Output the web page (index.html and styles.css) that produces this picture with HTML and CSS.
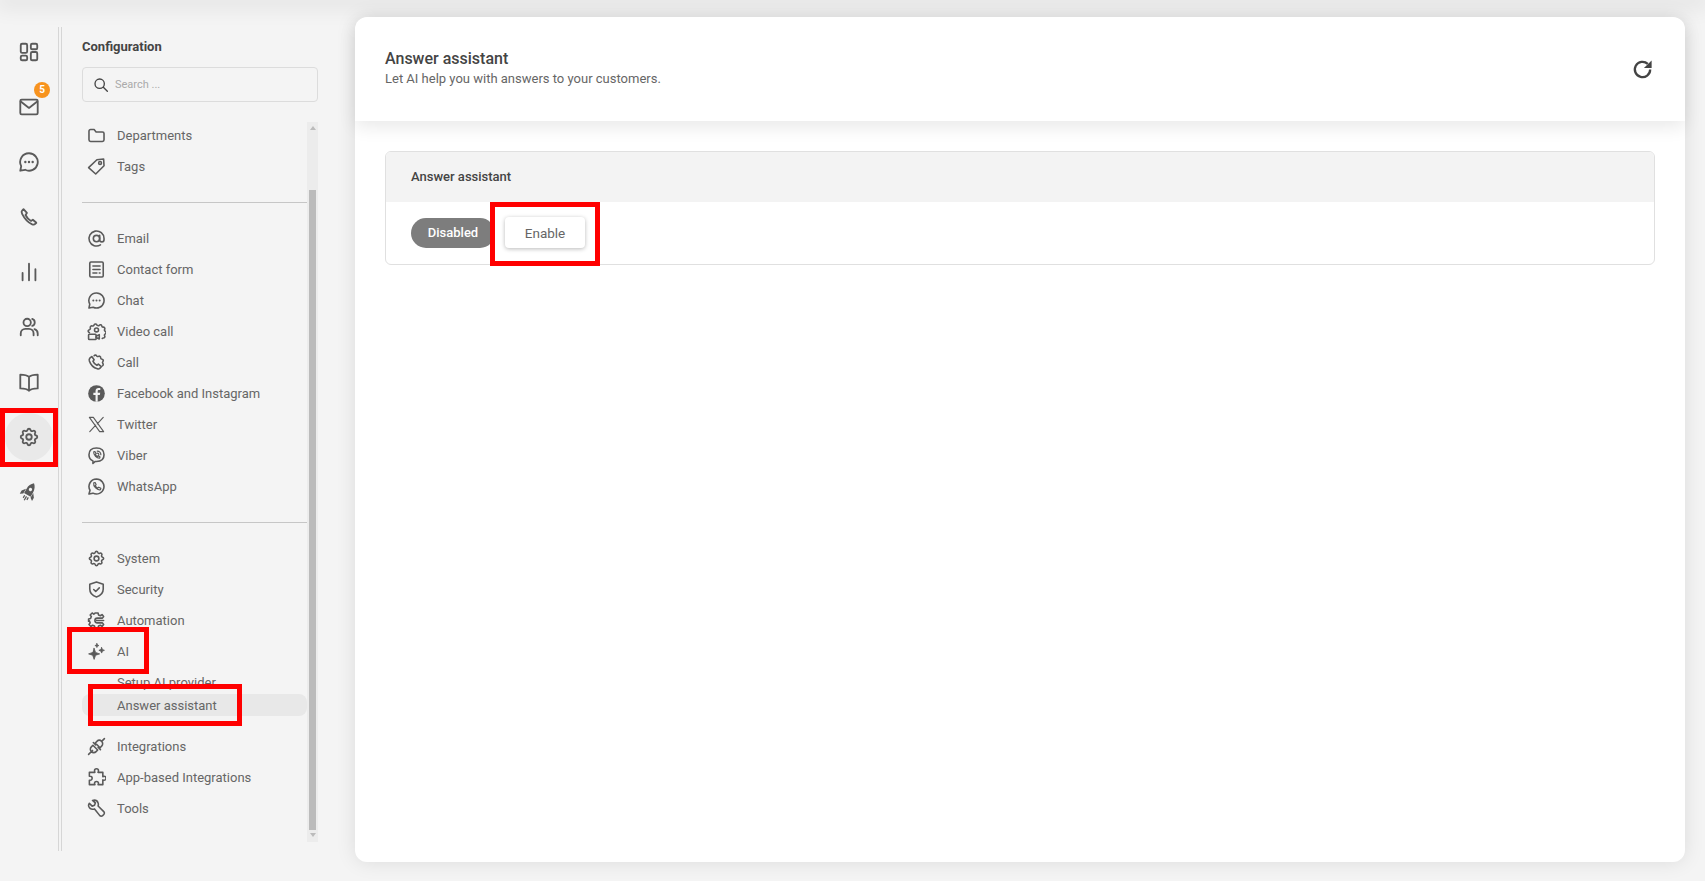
FILE: index.html
```html
<!DOCTYPE html>
<html lang="en">
<head>
    <meta charset="UTF-8">
    <meta name="viewport" content="width=device-width, initial-scale=1.0">
    <title>Answer assistant</title>
    <link rel="stylesheet" href="styles.css">
</head>
<body>
    <!-- shared icons -->
    <svg class="defs" aria-hidden="true">
        <symbol id="i-gear" viewBox="0 0 24 24">
            <path d="M10.325 4.317c.426-1.756 2.924-1.756 3.35 0a1.724 1.724 0 0 0 2.573 1.066c1.543-.94 3.31.826 2.37 2.37a1.724 1.724 0 0 0 1.065 2.572c1.756.426 1.756 2.924 0 3.35a1.724 1.724 0 0 0-1.066 2.573c.94 1.543-.826 3.31-2.37 2.37a1.724 1.724 0 0 0-2.572 1.065c-.426 1.756-2.924 1.756-3.35 0a1.724 1.724 0 0 0-2.573-1.066c-1.543.94-3.31-.826-2.37-2.37a1.724 1.724 0 0 0-1.065-2.572c-1.756-.426-1.756-2.924 0-3.35a1.724 1.724 0 0 0 1.066-2.573c-.94-1.543.826-3.31 2.37-2.37 1 .608 2.296.07 2.572-1.065z"/>
            <circle cx="12" cy="12" r="3"/>
        </symbol>
        <symbol id="i-chat" viewBox="0 0 24 24">
            <path d="M12 2.500a9.500 9.500 0 1 1-4.200 18L2.500 21.500l1-5A9.500 9.500 0 0 1 12 2.500z"/>
            <path class="dots" d="M8 12h.01M12 12h.01M16 12h.01"/>
        </symbol>
    </svg>

    <div class="topbar"></div>

    <div class="app">
        <nav class="rail">
            <div class="rail-list">
                <a class="rail-item">
                    <svg class="icon rail-icon" viewBox="0 0 24 24"><rect x="3" y="3" width="7" height="10" rx="1.5"/><rect x="14" y="3" width="7" height="6" rx="1.5"/><rect x="3" y="16" width="7" height="5" rx="1.5"/><rect x="14" y="12" width="7" height="9" rx="1.5"/></svg>
                </a>
                <a class="rail-item">
                    <svg class="icon rail-icon" viewBox="0 0 24 24"><rect x="2.500" y="4" width="19" height="16" rx="1.500"/><path d="M3 6l9 7 9-7"/></svg>
                    <span class="badge">5</span>
                </a>
                <a class="rail-item"><svg class="icon rail-icon"><use href="#i-chat"/></svg></a>
                <a class="rail-item">
                    <svg class="icon rail-icon" viewBox="0 0 24 24"><path d="M6 3.500L4.500 5c-.8.8-.8 2 0 3.500 2.500 5 6.500 9.500 11 11.500 1.500.6 2.500.3 3.300-.5l1.200-1.200-3.800-3.300-2 1.300c-2.500-1.300-4.700-3.800-6-6.500l1.500-2.200z"/></svg>
                </a>
                <a class="rail-item">
                    <svg class="icon rail-icon" viewBox="0 0 24 24"><path d="M5 21v-8M12 21V3M19 21V9"/></svg>
                </a>
                <a class="rail-item">
                    <svg class="icon rail-icon" viewBox="0 0 24 24"><circle cx="10" cy="7" r="4"/><path d="M3 21v-2a5 5 0 0 1 5-5h4a5 5 0 0 1 5 5v2M15.500 3.200a4 4 0 0 1 0 7.600M21.500 21v-2a5 5 0 0 0-3.500-4.700"/></svg>
                </a>
                <a class="rail-item">
                    <svg class="icon rail-icon" viewBox="0 0 24 24"><path d="M12 6.500C10 4.500 7 4 2.500 4v15c4.500 0 7.500.5 9.500 2.500 2-2 5-2.500 9.500-2.500V4C17 4 14 4.500 12 6.500zM12 6.500v15"/></svg>
                </a>
                <a class="rail-item rail-item-active"><svg class="icon rail-icon"><use href="#i-gear"/></svg></a>
                <a class="rail-item">
                    <svg class="rail-icon rocket" viewBox="0 0 24 24"><g transform="rotate(30 12 12)"><path d="M12 0c3 2.500 4.500 6 4.500 10v6h-9v-6C7.500 6 9 2.500 12 0z"/><path d="M7 10.500L3.500 15v4.500L7 17zM17 10.500l3.500 4.500v4.500L17 17z"/><circle class="hole" cx="12" cy="8.500" r="2"/><path class="flame" d="M9.500 18v3.500M12 18v5.500M14.500 18v3.500"/></g></svg>
                </a>
            </div>
        </nav>

        <aside class="sidebar">
            <h2 class="side-title">Configuration</h2>
            <div class="search">
                <svg class="icon search-icon" viewBox="0 0 24 24"><circle cx="10" cy="10" r="7"/><path d="M15.500 15.500L21.500 21.500"/></svg>
                <span class="search-text">Search ...</span>
            </div>
            <div class="side-scroll">
                <div class="nav">
                    <a class="row">
                        <svg class="icon" viewBox="0 0 24 24"><path d="M2.500 6.500a2 2 0 0 1 2-2h4.500l2.500 3h8a2 2 0 0 1 2 2v8a2 2 0 0 1-2 2h-15a2 2 0 0 1-2-2z"/></svg>
                        Departments
                    </a>
                    <a class="row">
                        <svg class="icon" viewBox="0 0 24 24"><path d="M2 13.500L12.500 3.500l8.500-1 .5 8.500L11 21.500z"/><circle cx="16.500" cy="7.500" r="1.800"/></svg>
                        Tags
                    </a>
                    <div class="divider"></div>
                    <a class="row">
                        <svg class="icon" viewBox="0 0 24 24"><circle cx="12" cy="12" r="4"/><path d="M16 8v5.500a2.750 2.750 0 0 0 5.500 0V12A9.500 9.500 0 1 0 17 20.100"/></svg>
                        Email
                    </a>
                    <a class="row">
                        <svg class="icon" viewBox="0 0 24 24"><rect x="3.500" y="2.500" width="17" height="19" rx="1.500"/><path d="M7.500 7.500h9M7.500 12h9M7.500 16.500h5M15.500 16.500h1"/></svg>
                        Contact form
                    </a>
                    <a class="row"><svg class="icon"><use href="#i-chat"/></svg>Chat</a>
                    <a class="row">
                        <svg class="icon" viewBox="0 0 24 24"><path d="M3 13.500l-1.200-1c-.8-1.200 0-2.500 1.200-2.800 1-.3 1.600-1.300 1.200-2.400-.4-1.500 1-2.800 2.400-2.300 1 .3 2-.2 2.300-1.200.5-1.400 2.300-1.700 3.100-.8l1 1.300c.8.500 2 .4 2.600-.3 1-.9 2.700-.5 3 1 .2 1 1 1.600 2 1.500 1.500 0 2.400 1.600 1.700 2.800-.5.900-.2 2 .8 2.500 1.300.7 1.300 2.500 0 3.200-1 .5-1.300 1.600-.8 2.500.7 1.200-.2 2.800-1.700 2.800-.5 0-1 .1-1.300.5"/><circle cx="12" cy="10" r="2.500"/><rect x="2" y="15.500" width="9.500" height="6.500" rx="1"/><path d="M11.500 18l4-2v5.500l-4-2"/></svg>
                        Video call
                    </a>
                    <a class="row">
                        <svg class="icon" viewBox="0 0 24 24"><path d="M9 3.500c1-1.300 2.500-1 3 0 .5 1 1.600 1.300 2.500.7 1.200-.7 2.800.2 2.700 1.700 0 1 .7 1.800 1.800 1.900 1.500.2 2.100 2 1.100 3-.7.800-.7 1.800 0 2.600.8 1 .4 2.200-.6 2.800"/><path d="M3.500 6.500L6 4.500l3 4-1.500 1.800c.9 2.200 2.800 4.200 5 5.200l1.800-1.500 3.800 3.200-2 2.300c-.8.700-1.800.9-3 .4C8 18.500 4.500 14.500 3 10c-.4-1.300-.2-2.600.5-3.500z"/></svg>
                        Call
                    </a>
                    <a class="row">
                        <svg class="icon filled" viewBox="0 0 24 24"><circle cx="12" cy="12" r="10.500"/><path class="cut" d="M13.500 22.500V14h2.700l.5-3h-3.200V9.200c0-.9.400-1.500 1.600-1.500h1.700V5.100c-.5-.1-1.300-.2-2.200-.2-2.300 0-3.800 1.400-3.800 3.900V11H8v3h2.800v8.500z"/></svg>
                        Facebook and Instagram
                    </a>
                    <a class="row">
                        <svg class="icon thin" viewBox="0 0 24 24"><path d="M3 3l13 18h5L8 3zM20.500 3l-7.500 8.200M3.500 21l7.500-8.200"/></svg>
                        Twitter
                    </a>
                    <a class="row">
                        <svg class="icon" viewBox="0 0 24 24"><path d="M12 2.500c6 0 9.500 2.800 9.500 8.500s-3.500 8.500-9.500 8.500h-1.500L7.500 22v-3.200c-3.200-1.300-5-3.800-5-7.800 0-5.700 3.500-8.500 9.500-8.500z"/><path class="half" d="M8.500 7.500l1.500-.5 1.500 2.500-1 1c.5 1.300 1.500 2.300 2.800 2.800l1-1 2.200 1.500-.5 1.500c-3.500.5-8-4-7.500-7.800zM13 6.500a4.500 4.500 0 0 1 4.500 4.500M13 9a2 2 0 0 1 2 2"/></svg>
                        Viber
                    </a>
                    <a class="row">
                        <svg class="icon" viewBox="0 0 24 24"><path d="M12 2.500a9.500 9.500 0 1 1-4.500 17.900L2.500 21.500l1.300-4.800A9.500 9.500 0 0 1 12 2.500z"/><path class="half" d="M8.500 7.500l1.800-.5 1.300 2.700-1.100 1.200c.6 1.400 1.700 2.500 3.100 3.100l1.200-1.100 2.700 1.300-.5 1.800c-4 1.200-9.500-4.300-8.500-8.500z"/></svg>
                        WhatsApp
                    </a>
                    <div class="divider"></div>
                    <a class="row"><svg class="icon"><use href="#i-gear"/></svg>System</a>
                    <a class="row">
                        <svg class="icon" viewBox="0 0 24 24"><path d="M12 2.500l8.500 3v6c0 4.800-3.300 8.500-8.500 10-5.200-1.500-8.500-5.200-8.500-10v-6z"/><path d="M8.500 12l2.500 2.500 4.500-4.500"/></svg>
                        Security
                    </a>
                    <a class="row">
                        <svg class="icon" viewBox="0 0 24 24"><path d="M10 2.500h4l.5 2.500 2.500 1 2-1.500 2 2.500-1.500 2H13a3 3 0 0 0 0 6h6.500l1.500 2-2 2.500-2-1.500-2.500 1-.5 2.500h-4l-.5-2.500-2.500-1-2 1.500-2.500-2.500 1.500-2-1-2.500L2 13v-3l2.500-.5 1-2.500L4 5l2.500-2.500 2 1.500 1-.5z"/><path d="M12 12h9"/></svg>
                        Automation
                    </a>
                    <a class="row">
                        <svg class="icon sparkle" viewBox="0 0 24 24"><path d="M9 8l1.800 5.200 5.200 1.800-5.200 1.800L9 22l-1.800-5.200L2 15l5.200-1.800zM18.500 7l1 2.500 2.500 1-2.500 1-1 2.500-1-2.500-2.500-1 2.500-1zM12.500 2l.7 1.800 1.800.7-1.800.7-.7 1.800-.7-1.800-1.800-.7 1.800-.7z"/></svg>
                        AI
                    </a>
                    <a class="row-sub row-first">Setup AI provider</a>
                    <a class="row-sub row-active">Answer assistant</a>
                    <a class="row row-after">
                        <svg class="icon" viewBox="0 0 24 24"><path d="M2 22l5-5M7.500 10.500l6 6-2 2c-1.700 1.700-4.300 1.700-6 0s-1.700-4.300 0-6zM10.500 7.500l2-2c1.700-1.700 4.300-1.700 6 0s1.700 4.300 0 6l-2 2zM8 7l3 3M14 13l3 3M18.500 5.500L22 2"/></svg>
                        Integrations
                    </a>
                    <a class="row">
                        <svg class="icon" viewBox="0 0 24 24"><path d="M9.500 3.500a2.500 2.500 0 0 1 5 0c0 .8-.3 1.500-.5 2h6v5.500c.5-.3 1-.5 1.500-.5a2.500 2.500 0 0 1 0 5c-.5 0-1-.2-1.500-.5V21h-6c.2-.5.5-1 .5-1.500a2.500 2.500 0 0 0-5 0c0 .5.300 1 .5 1.500H3v-5.500h1a2.500 2.500 0 0 0 0-5H3V5.500h7c-.2-.5-.5-1.200-.5-2z"/></svg>
                        App-based Integrations
                    </a>
                    <a class="row">
                        <svg class="icon" viewBox="0 0 24 24"><path d="M3 5.500L6.500 9 9.500 8l1-3L7 1.800c3-.8 6 .5 7 3.200.5 1.300.5 2.500 0 3.800l7.200 7.200c1 1 1 2.500 0 3.500l-1.500 1.500c-1 1-2.500 1-3.500 0L9.500 12.500c-3 1-6-.2-7.200-3-.5-1.300-.2-3 .7-4z"/></svg>
                        Tools
                    </a>
                </div>
                <div class="scrollbar">
                    <span class="arrow-up"></span>
                    <div class="thumb"></div>
                    <span class="arrow-down"></span>
                </div>
            </div>
        </aside>

        <main class="card">
            <header class="card-head">
                <div class="card-text">
                    <h1 class="card-title">Answer assistant</h1>
                    <p class="card-sub">Let AI help you with answers to your customers.</p>
                </div>
                <svg class="refresh" viewBox="0 0 24 24"><path class="refresh-arc" d="M20 12a8 8 0 1 1-2.500-5.800"/><path class="refresh-tip" d="M21.500 2.500v8h-8z"/></svg>
            </header>
            <section class="panel">
                <div class="panel-head">Answer assistant</div>
                <div class="panel-body">
                    <span class="pill">Disabled</span>
                    <button class="btn">Enable</button>
                </div>
            </section>
        </main>
    </div>

    <!-- red highlight frames drawn over the page -->
    <div class="mark mark-gear"></div>
    <div class="mark mark-ai"></div>
    <div class="mark mark-answer"></div>
    <div class="mark mark-enable"></div>
</body>
</html>
```
FILE: styles.css
```css
* {
    box-sizing: border-box;
}
html, body {
    height: 100%;
}
body {
    margin: 0;
    height: 881px;
    overflow: hidden;
    font-family: Roboto, "Liberation Sans", sans-serif;
    font-size: 13px;
    color: #666;
    background-color: #f4f4f4;
}
.defs {
    display: none;
}
.topbar {
    height: 0;
    box-shadow: 0 0 22px 5px rgba(0,0,0,0.12);
}
.app {
    display: flex;
    align-items: flex-start;
}

/* icons */
.icon {
    width: 19px;
    height: 19px;
    flex: none;
    fill: none;
    stroke: #5a5a5a;
    stroke-width: 2;
    stroke-linecap: round;
    stroke-linejoin: round;
}
.dots {
    stroke-width: 2.6;
}
.thin {
    stroke-width: 1.4;
}
.half {
    stroke-width: 1.5;
}
.filled {
    fill: #5a5a5a;
    stroke: none;
}
.cut {
    fill: #f4f4f4;
}
.sparkle {
    fill: #5a5a5a;
    stroke-width: 1;
}

/* left rail */
.rail {
    width: 59px;
    height: 824px;
    margin-top: 27px;
    border-right: 1px solid #d6d6d6;
}
.rail-list {
    margin-top: -3px;
}
.rail-item {
    position: relative;
    display: flex;
    align-items: center;
    justify-content: center;
    height: 55px;
    width: 58px;
}
.rail-item-active::before {
    content: "";
    position: absolute;
    left: 5px;
    top: 4px;
    width: 48px;
    height: 48px;
    border-radius: 50%;
    background-color: #e9e9e9;
}
.rail-icon {
    position: relative;
    width: 22px;
    height: 22px;
}
.rocket {
    width: 20px;
    height: 20px;
    fill: #5a5a5a;
}
.rocket .hole {
    fill: #f4f4f4;
}
.rocket .flame {
    fill: none;
    stroke: #5a5a5a;
    stroke-width: 1.5;
}
.badge {
    position: absolute;
    left: 34px;
    top: 3px;
    width: 16px;
    height: 16px;
    border-radius: 50%;
    background-color: #f7931e;
    color: #fff;
    font-size: 10px;
    font-weight: 700;
    line-height: 16px;
    text-align: center;
}

/* configuration column */
.sidebar {
    width: 259px;
    height: 824px;
    margin-top: 27px;
    margin-left: 2px;
    padding: 12px 0 0 20px;
    border-left: 1px solid #d6d6d6;
}
.side-title {
    margin: 0;
    font-size: 13px;
    font-weight: 700;
    line-height: 16px;
    color: #444;
}
.search {
    display: flex;
    align-items: center;
    gap: 6px;
    width: 236px;
    height: 35px;
    margin-top: 12px;
    padding-left: 10px;
    border: 1px solid #dcdcdc;
    border-radius: 4px;
}
.search-icon {
    width: 16px;
    height: 16px;
    stroke: #444;
}
.search-text {
    font-size: 11px;
    color: #aaa;
}
.side-scroll {
    display: flex;
    width: 236px;
    height: 722px;
    margin-top: 18px;
}
.nav {
    width: 225px;
    overflow: hidden;
}
.row {
    display: flex;
    align-items: center;
    gap: 11px;
    height: 31px;
    padding-left: 5px;
    color: #666;
}
.divider {
    height: 1px;
    margin: 20px 0;
    background-color: #c6c6c6;
}
.row-sub {
    display: flex;
    align-items: center;
    height: 22px;
    padding-left: 35px;
    color: #666;
}
.row-first {
    margin-top: 4px;
}
.row-active {
    margin-top: 1px;
    border-radius: 8px;
    background-color: #e8e8e8;
}
.row-after {
    margin-top: 15px;
}
.scrollbar {
    display: flex;
    flex-direction: column;
    align-items: center;
    width: 11px;
    height: 720px;
    margin-top: 2px;
    background-color: #ececec;
}
.arrow-up, .arrow-down {
    width: 0;
    height: 0;
    margin-top: 4px;
    border-left: 3px solid transparent;
    border-right: 3px solid transparent;
}
.arrow-up {
    border-bottom: 4px solid #bbb;
}
.arrow-down {
    margin-top: 3px;
    border-top: 4px solid #bbb;
}
.thumb {
    width: 7px;
    height: 640px;
    margin-top: 60px;
    background-color: #bbb;
}

/* main card */
.card {
    width: 1330px;
    height: 845px;
    margin: 17px 0 0 35px;
    border-radius: 12px;
    background-color: #fff;
    box-shadow: 0 0 20px rgba(0,0,0,0.1);
}
.card-head {
    display: flex;
    align-items: center;
    justify-content: space-between;
    height: 104px;
    padding: 0 30px;
    border-radius: 12px 12px 0 0;
    box-shadow: 0 6px 18px rgba(0,0,0,0.09);
}
.card-text {
    margin-bottom: 3px;
}
.card-title {
    margin: 0;
    font-size: 16px;
    font-weight: 500;
    line-height: 20px;
    color: #444;
}
.card-sub {
    margin: 1px 0 0;
    font-size: 13px;
    line-height: 17px;
    color: #666;
}
.refresh {
    width: 23px;
    height: 23px;
    margin-right: 1px;
}
.refresh-arc {
    fill: none;
    stroke: #444;
    stroke-width: 2.4;
}
.refresh-tip {
    fill: #444;
}
.panel {
    margin: 30px 30px 0;
    height: 114px;
    border: 1px solid #e0e0e0;
    border-radius: 6px;
    overflow: hidden;
}
.panel-head {
    height: 50px;
    padding-left: 25px;
    font-size: 13px;
    font-weight: 500;
    line-height: 50px;
    color: #444;
    background-color: #f3f3f3;
}
.panel-body {
    display: flex;
    align-items: center;
    height: 63px;
    padding: 0 0 2px 25px;
}
.pill {
    width: 84px;
    height: 30px;
    border-radius: 15px;
    background-color: #7d7d7d;
    color: #fff;
    font-weight: 500;
    line-height: 30px;
    text-align: center;
}
.btn {
    width: 80px;
    height: 31px;
    margin-left: 10px;
    border: none;
    border-radius: 4px;
    background-color: #fff;
    box-shadow: 0 1px 4px rgba(0,0,0,0.28);
    color: #666;
    font-family: inherit;
    font-size: 13.5px;
}

/* red frames */
.mark {
    position: absolute;
    border: 5px solid #f00;
}
.mark-gear {
    left: 0;
    top: 408px;
    width: 58px;
    height: 59px;
}
.mark-ai {
    left: 67px;
    top: 627px;
    width: 82px;
    height: 47px;
}
.mark-answer {
    left: 88px;
    top: 684px;
    width: 154px;
    height: 42px;
}
.mark-enable {
    left: 490px;
    top: 202px;
    width: 110px;
    height: 64px;
}
```
